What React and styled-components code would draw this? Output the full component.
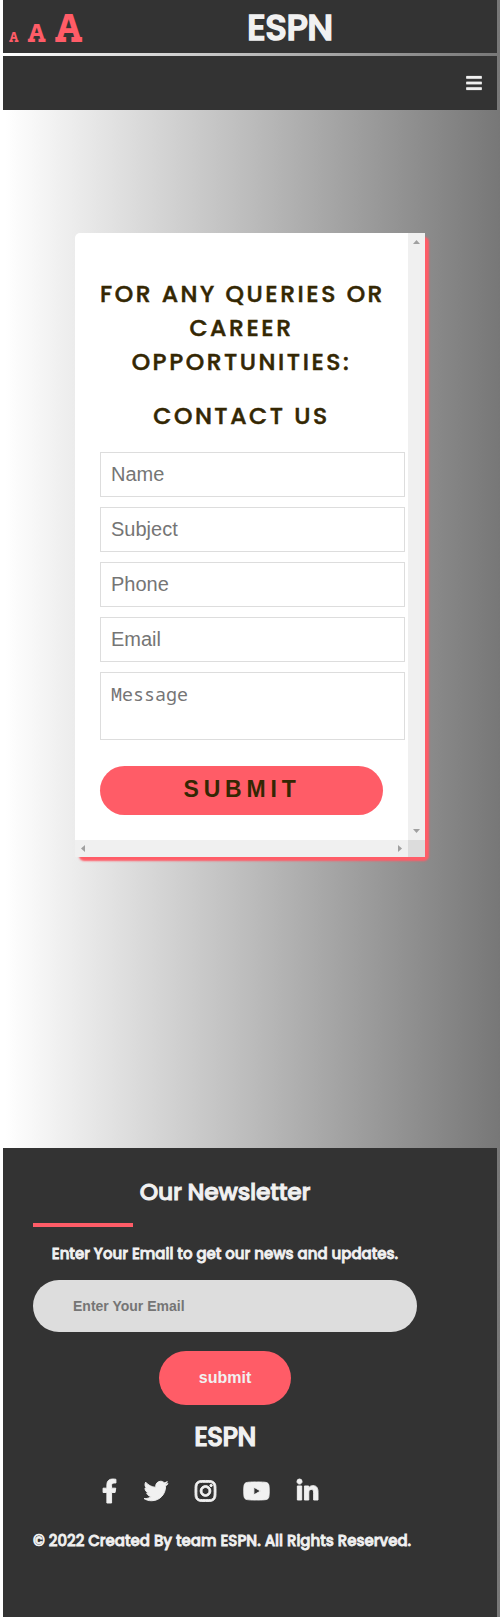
import React from "react";
import styled, { createGlobalStyle, css } from "styled-components";
import { FaBars, FaFacebookF, FaTwitter, FaInstagram, FaYoutube, FaLinkedinIn } from "react-icons/fa";

const Global = createGlobalStyle`
  *, *::before, *::after { box-sizing: border-box; }
  body { margin: 0; }
`;

const accent = "#ff5c67";
const dark = "#333333";
const light = "#f1f1f1";
const heading = `Poppins, Inter, "Open Sans", sans-serif`;
const arial = `Arial, "Liberation Sans", sans-serif`;

const Page = styled.div`
  display: flex;
  flex-direction: column;
  height: 1617px;
  padding: 0 3px;
  background: linear-gradient(to right, #ffffff 0, #ffffff 1%, #777777 100%);
  font-family: ${heading};
  color: ${light};
`;

const Header = styled.header`
  display: grid;
  grid-template-columns: 90px 1fr;
  height: 53px;
  margin-bottom: 3px;
  background: ${dark};
`;

const FontSizes = styled.div`
  display: flex;
  align-items: baseline;
  gap: 9px;
  padding: 5px 0 0 6px;
  color: ${accent};
  font-family: Arvo, "DejaVu Serif", serif;
  font-weight: 700;
  line-height: 46px;
`;

const SizeLetter = styled.span`
  font-size: ${(p) => p.$size}px;
`;

const emboldened = css`
  font-weight: 500;
  letter-spacing: ${(p) => p.$spacing || 0}px;
  -webkit-text-stroke: ${(p) => p.$stroke || 0.9}px currentColor;
`;

const Brand = styled.h1`
  ${emboldened}
  margin: 0;
  padding-left: 154px;
  font-size: 36px;
  line-height: 55px;
`;

const Nav = styled.nav`
  display: flex;
  align-items: center;
  justify-content: flex-end;
  height: 54px;
  padding-right: 15px;
  background: ${dark};
  svg { width: 16px; height: 18px; stroke: currentColor; stroke-width: 8px; }
`;

const Main = styled.main`
  flex: 1;
  padding: 123px 0 0 72px;
`;

const Card = styled.section`
  display: grid;
  grid-template: 607px 17px / 333px 17px;
  width: 350px;
  border-radius: 5px;
  background: #fff;
  box-shadow: 4px 4px 2px ${accent};
`;

const Form = styled.form`
  display: flex;
  flex-direction: column;
  gap: 10px;
  padding: 44px 25px 0;
  color: #342703;
`;

const FormTitle = styled.h2`
  margin: 0 0 ${(p) => p.$below}px;
  font-size: 23.5px;
  font-weight: 500;
  line-height: 34px;
  letter-spacing: 2.55px;
  -webkit-text-stroke: 0.5px currentColor;
  text-align: center;
  white-space: nowrap;
`;

const Line = styled.span`
  display: block;
`;

const field = css`
  width: 305px;
  padding: 10px;
  border: 1px solid #dddddd;
  background: #fff;
  outline: none;
  resize: none;
  &::placeholder { color: #757575; opacity: 1; }
`;

const Input = styled.input`
  ${field}
  height: 45px;
  font: 20px ${arial};
`;

const TextArea = styled.textarea`
  ${field}
  display: block;
  height: 68px;
  padding-top: 9px;
  overflow: hidden;
  font: 18.33px/24px "Noto Sans Mono", "DejaVu Sans Mono", monospace;
`;

const SubmitButton = styled.button`
  width: 283px;
  height: 49px;
  margin-top: 16px;
  padding: 0 0 2px 1px;
  border: 0;
  border-radius: 25px;
  background: ${accent};
  color: #342703;
  font: 700 23px ${arial};
  letter-spacing: 4.8px;
`;

const ScrollTrack = styled.div`
  display: flex;
  flex-direction: ${(p) => (p.$vertical ? "column" : "row")};
  align-items: center;
  justify-content: space-between;
  padding: ${(p) => (p.$vertical ? "7px 0" : "0 6px")};
  background: #f0f0f0;
`;

const Corner = styled.div`
  background: #dcdcdc;
`;

const Arrow = styled.svg`
  display: block;
  fill: #a0a0a0;
`;

const Footer = styled.footer`
  display: flex;
  flex-direction: column;
  height: 469px;
  padding: 26px 80px 0 30px;
  background: ${dark};
  white-space: nowrap;
`;

const NewsTitle = styled.h3`
  ${emboldened}
  margin: 0;
  font-size: 23.5px;
  line-height: 35px;
  text-align: center;
`;

const Rule = styled.div`
  width: 100px;
  height: 4px;
  margin: 14px 0 15px;
  background: ${accent};
`;

const NewsText = styled.p`
  ${emboldened}
  margin: 0 0 15px;
  font-size: 15px;
  line-height: 23px;
  text-align: center;
`;

const EmailInput = styled.input`
  width: 384px;
  height: 52px;
  padding: 0 40px;
  border: 0;
  border-radius: 26px;
  background: #dddddd;
  font: 700 14px ${arial};
  &::placeholder { color: #757575; opacity: 1; }
`;

const NewsButton = styled.button`
  align-self: center;
  width: 132px;
  height: 54px;
  margin-top: 19px;
  border: 0;
  border-radius: 27px;
  background: ${accent};
  color: #f1f1f1;
  font: 700 16px ${arial};
`;

const FooterBrand = styled.h3`
  ${emboldened}
  margin: 15px 0 24px;
  font-size: 26px;
  line-height: 35px;
  text-align: center;
`;

const Socials = styled.div`
  display: flex;
  align-items: center;
  gap: 27px;
  height: 24px;
  padding-left: 69px;
`;

const SocialLink = styled.span`
  display: block;
  width: ${(p) => p.$width}px;
  height: 24px;
  svg {
    display: block;
    width: 100%;
    height: 100%;
    overflow: visible;
    stroke: currentColor;
    stroke-width: 20px;
  }
`;

const Copyright = styled.p`
  ${emboldened}
  margin: 26px 0 0;
  font-size: 15px;
  line-height: 23px;
`;

export default function App() {
  return (
    <Page>
      <Global />
      <Header>
        <FontSizes>
          <SizeLetter $size={13}>A</SizeLetter>
          <SizeLetter $size={25}>A</SizeLetter>
          <SizeLetter $size={38}>A</SizeLetter>
        </FontSizes>
        <Brand $stroke={1.6} $spacing={-0.6}>ESPN</Brand>
      </Header>
      <Nav><FaBars /></Nav>
      <Main>
        <Card>
          <Form>
            <FormTitle $below={10}>
              <Line>FOR ANY QUERIES OR</Line>
              <Line>CAREER</Line>
              <Line>OPPORTUNITIES:</Line>
            </FormTitle>
            <FormTitle as="h3" $below={9}>CONTACT US</FormTitle>
            <Input placeholder="Name" />
            <Input placeholder="Subject" />
            <Input placeholder="Phone" />
            <Input placeholder="Email" />
            <TextArea placeholder="Message" />
            <SubmitButton type="button">SUBMIT</SubmitButton>
          </Form>
          <ScrollTrack $vertical>
            <Arrow width="7" height="4"><path d="M0 4L3.5 0L7 4z" /></Arrow>
            <Arrow width="7" height="4"><path d="M0 0L3.5 4L7 0z" /></Arrow>
          </ScrollTrack>
          <ScrollTrack>
            <Arrow width="4" height="7"><path d="M4 0L0 3.5L4 7z" /></Arrow>
            <Arrow width="4" height="7"><path d="M0 0L4 3.5L0 7z" /></Arrow>
          </ScrollTrack>
          <Corner />
        </Card>
      </Main>
      <Footer>
        <NewsTitle $spacing={-0.25}>Our Newsletter</NewsTitle>
        <Rule />
        <NewsText $stroke={0.8}>Enter Your Email to get our news and updates.</NewsText>
        <EmailInput placeholder="Enter Your Email" />
        <NewsButton type="button">submit</NewsButton>
        <FooterBrand $stroke={1.2} $spacing={-0.5}>ESPN</FooterBrand>
        <Socials>
          <SocialLink $width={15}><FaFacebookF /></SocialLink>
          <SocialLink $width={24}><FaTwitter /></SocialLink>
          <SocialLink $width={21}><FaInstagram /></SocialLink>
          <SocialLink $width={27}><FaYoutube /></SocialLink>
          <SocialLink $width={21}><FaLinkedinIn /></SocialLink>
        </Socials>
        <Copyright $stroke={0.8}>© 2022 Created By team ESPN. All Rights Reserved.</Copyright>
      </Footer>
    </Page>
  );
}
